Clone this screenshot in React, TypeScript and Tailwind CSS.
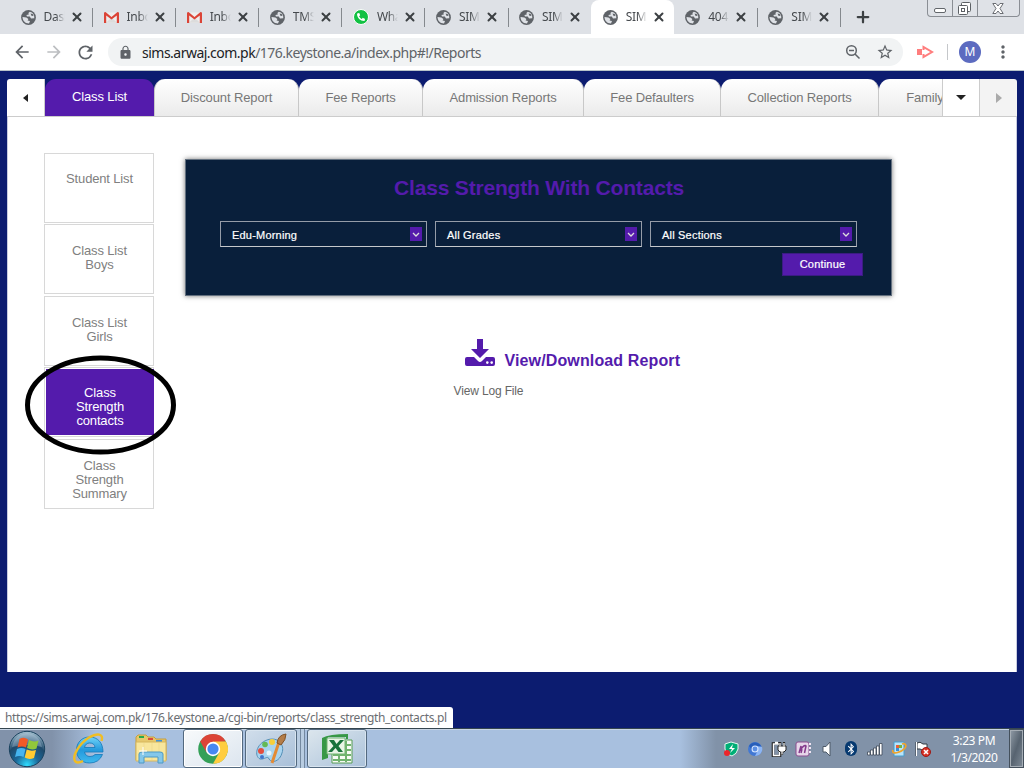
import React from "react";
import { FaBluetoothB, FaPhone } from "react-icons/fa";
import { X, Plus } from "lucide-react";
import { MdLock, MdStarBorder, MdArrowBack, MdArrowForward, MdRefresh, MdMoreVert } from "react-icons/md";

const UI = "font-['Noto_Sans','Open_Sans',sans-serif]";

function Globe() {
  return (
    <svg width="15" height="15" viewBox="0 0 15 15" className="shrink-0">
      <circle cx="7.5" cy="7.5" r="7.4" fill="#5f6368" />
      <path d="M8.8 1.8 L7.4 3 L7.8 4.4 L5.4 5 L6 6.4 L8.8 6.6 L10 8.6 L13.3 8.3 C13.6 5 12 2.4 8.8 1.8Z" fill="#dee1e6" />
      <path d="M1.5 7 L5.4 7.4 L7.4 9 L6.6 10.4 L9 11 L8 13.4 C4 13.4 1.6 10.8 1.5 7Z" fill="#dee1e6" />
      <path d="M9.6 3.6 L12 4.2 L12.4 6 L10.4 5.8Z" fill="#5f6368" />
    </svg>
  );
}

function Gmail() {
  return (
    <svg width="15" height="15" viewBox="0 0 15 15" className="shrink-0">
      <path d="M2 2.5H13V13H2Z" fill="#eeeeee" />
      <path d="M2 12.8 L7.5 7.5 L13 12.8Z" fill="#dcdcdc" />
      <path d="M0 3.2 Q0 2 1.5 2 L7.5 7 L13.5 2 Q15 2 15 3.2 V13 H12.8 V5.4 L7.5 9.6 L2.2 5.4 V13 H0Z" fill="#db4437" />
    </svg>
  );
}

function WhatsApp() {
  return (
    <span className="flex size-[16px] shrink-0 items-center justify-center rounded-full border border-white bg-[#12c143] text-[8px] text-white">
      <FaPhone className="-scale-x-100" />
    </span>
  );
}

const browserTabs = [
  { t: "Dashboard", i: "globe" },
  { t: "Inbox", i: "gmail" },
  { t: "Inbox", i: "gmail" },
  { t: "TMS", i: "globe" },
  { t: "WhatsApp", i: "wa" },
  { t: "SIMS", i: "globe" },
  { t: "SIMS", i: "globe" },
  { t: "SIMS", i: "globe", active: true },
  { t: "404", i: "globe" },
  { t: "SIMS", i: "globe" },
];

function TabStrip() {
  return (
    <div className="flex h-[34px] bg-[#dee1e6] pl-[9px]">
      {browserTabs.map((b, k) => (
        <div key={k} className={b.active ? "relative flex h-full w-[83.1px] items-center rounded-t-lg bg-white pl-[12px]" : "relative flex h-full w-[83.1px] items-center pl-[11.5px]"}>
          {b.i === "globe" ? <Globe /> : b.i === "gmail" ? <Gmail /> : <WhatsApp />}
          <span className="ml-[8px] w-[21px] overflow-hidden text-[12px] tracking-[-0.3px] whitespace-nowrap text-[#45494d] [mask-image:linear-gradient(to_right,black_55%,transparent)]">{b.t}</span>
          <X className="ml-[5px] size-[14px] shrink-0 text-[#3c4043]" strokeWidth={3.4} />
          {b.active || k === 6 ? null : <span className="absolute top-[8px] right-[-1px] h-[19px] w-px bg-[#85898e]" />}
        </div>
      ))}
      <Plus className="mt-[8px] ml-[14px] size-[18px] text-[#3c4043]" strokeWidth={3} />
      <div className="ml-[55px] flex h-[17px] w-[93px] rounded-b-[4px] border border-t-0 border-[#8a8e94] bg-[#dfe2e7]">
        <div className="flex w-[25px] items-center justify-center border-r border-[#8a8e94] pt-[4px]">
          <span className="h-[5px] w-[12px] rounded-[2px] border border-[#62666b] bg-white" />
        </div>
        <div className="flex w-[25px] items-center justify-center border-r border-[#8a8e94]">
          <svg width="13" height="13" viewBox="0 0 13 13" fill="white" stroke="#5c6065"><rect x="3.5" y=".5" width="9" height="9" rx="1" /><rect x=".5" y="3.5" width="9" height="9" rx="1" /><rect x="3.5" y="6.5" width="3" height="3" /></svg>
        </div>
        <div className="flex flex-1 items-center justify-center">
          <svg width="12" height="11" viewBox="0 0 12 11" fill="white" stroke="#5c6065" strokeWidth=".9"><path d="M.8.5H4L6 3 8 .5H11.2L8 5.5 11.2 10.5H8L6 8 4 10.5H.8L4 5.5Z" /></svg>
        </div>
      </div>
    </div>
  );
}

function Toolbar() {
  return (
    <div className="flex h-[37px] items-center border-b border-[#b8c3c9] bg-white pl-[12px] text-[#5f6368]">
      <MdArrowBack className="size-[20px]" />
      <MdArrowForward className="ml-[12px] size-[20px] text-[#bcbec1]" />
      <MdRefresh className="ml-[11px] size-[21px]" />
      <div className="ml-[12px] flex h-[28px] w-[795px] items-center rounded-full bg-[#f1f3f4] pl-[10px]">
        <MdLock className="size-[15px]" />
        <span className="ml-[9px] w-[690px] text-[14px] tracking-[-0.51px] whitespace-nowrap"><span className="text-[#202124]">sims.arwaj.com.pk</span>/176.keystone.a/index.php#!/Reports</span>
        <svg width="16" height="16" viewBox="0 0 16 16" className="ml-[13px]" fill="none" stroke="currentColor" strokeWidth="1.5"><circle cx="6.5" cy="6.5" r="4.8" /><path d="M4 6.5H9M10 10L14.500 14.500" /></svg>
        <MdStarBorder className="ml-[15px] size-[18px]" />
      </div>
      <svg width="17" height="14" viewBox="0 0 17 14" className="ml-[14px]"><path d="M0 4H5V10H0Z" fill="#ff7d7d" /><path d="M6.500 5V2L15 7L6.500 12V9" fill="none" stroke="#ff7d7d" strokeWidth="2" /></svg>
      <span className="ml-[13px] h-[16px] w-px bg-[#c5c7ca]" />
      <span className="ml-[11px] flex size-[22px] items-center justify-center rounded-full bg-[#5c6bc0] text-[12px] text-white">M</span>
      <MdMoreVert className="ml-[12px] size-[20px]" />
    </div>
  );
}

function PageTab({ label, cls }: { label: string; cls: string }) {
  return <div className={"h-[37px] shrink-0 rounded-t-[11px] border-r border-[#c8c8c8] bg-linear-to-b from-white to-[#ebebeb] pt-[11px] text-center leading-[16px] tracking-[-0.12px] whitespace-nowrap text-[#777] " + cls}>{label}</div>;
}

function PageTabs() {
  return (
    <div className="flex h-[38px] border-b border-[#ccc] text-[13px]">
      <div className="flex w-[37px] items-center justify-center rounded-tl-[3px] bg-white">
        <span className="border-y-4 border-r-[5px] border-y-transparent border-r-[#222]" />
      </div>
      <div className="flex w-[898px] overflow-hidden border-l border-[#ccc]">
        <div className="h-[37px] w-[109px] shrink-0 rounded-t-[11px] bg-[#541bac] pt-[10px] text-center leading-[16px] tracking-[-0.12px] text-white">Class List</div>
        <PageTab label="Discount Report" cls="w-[145px] border-l border-l-[#c8c8c8]" />
        <PageTab label="Fee Reports" cls="w-[124px]" />
        <PageTab label="Admission Reports" cls="w-[161px]" />
        <PageTab label="Fee Defaulters" cls="w-[137px]" />
        <PageTab label="Collection Reports" cls="w-[158px]" />
        <PageTab label="Family Reports" cls="w-[141px]" />
      </div>
      <div className="flex w-[37px] items-center justify-center border-l border-[#ccc] bg-white">
        <span className="border-x-[5px] border-t-[5px] border-x-transparent border-t-[#222]" />
      </div>
      <div className="flex flex-1 items-center justify-center rounded-tr-[3px] border-l border-[#ccc] bg-[#f3f3f3]">
        <span className="border-y-[5px] border-l-[6px] border-y-transparent border-l-[#aaa]" />
      </div>
    </div>
  );
}

const reports = [["Student List"], ["Class List", "Boys"], ["Class List", "Girls"], ["Class", "Strength", "contacts"], ["Class", "Strength", "Summary"]];

function SideMenu() {
  return (
    <div className="relative mt-[36px] ml-[36px] flex w-[110px] shrink-0 flex-col gap-[1.4px] text-center text-[13px] leading-[14px] tracking-[-0.15px] text-[#808080]">
      {reports.map((r, i) => (
        <div key={i} className="flex h-[70px] border border-[#d8d8d8] pl-px">
          <div className={i === 3 ? "-mr-px mt-px mb-px flex-1 bg-[#541bac] pt-[17px] text-white" : i === 0 ? "flex-1 pt-[18px]" : "flex-1 pt-[19px]"}>
            {r.map((line) => <div key={line}>{line}</div>)}
          </div>
        </div>
      ))}
      <svg width="152" height="100" viewBox="0 0 152 100" className="absolute top-[202px] left-[-20px]">
        <ellipse cx="76.5" cy="50" rx="73" ry="47" fill="none" stroke="black" strokeWidth="5" />
      </svg>
    </div>
  );
}

function Select({ label }: { label: string }) {
  return (
    <div className="flex h-[26px] w-[207px] items-center justify-between border border-[#959ca8] border-b-[#c5c8cb] pr-[4px] pl-[11px] text-[11px] tracking-[0.2px] text-white [-webkit-text-stroke:.2px_white]">
      <span className="pt-[2px]">{label}</span>
      <span className="flex h-[14px] w-[12px] items-center justify-center bg-[#541bac]">
        <svg width="8" height="5" viewBox="0 0 8 5" fill="none" stroke="#ddd" strokeWidth="1.3"><path d="M1 1L4 4 7 1" /></svg>
      </span>
    </div>
  );
}

function ReportContent() {
  return (
    <div className="ml-[31px] w-[707px] pt-[42px]">
      <div className="h-[137px] border border-[#63707f] bg-[#091f3b] pt-[16px] pr-[28px] pl-[34px] shadow-[0_0_5px_#777]">
        <h1 className="text-center text-[21px] leading-[24px] font-bold tracking-[-0.18px] text-[#541bac]"><span className="mr-[5px]">Class Strength With Contacts</span></h1>
        <div className="mt-[21px] flex gap-[8px]">
          <Select label="Edu-Morning" />
          <Select label="All Grades" />
          <Select label="All Sections" />
        </div>
        <div className="mt-[6px] flex justify-end">
          <button className="h-[23px] w-[81px] border border-[#3b1c83] bg-[#541bac] text-[11px] tracking-[0.2px] text-white [-webkit-text-stroke:.2px_white]">Continue</button>
        </div>
      </div>
      <div className="mt-[42px] ml-[280px] flex text-[#541bac]">
        <svg width="30" height="29" viewBox="0 0 30 29" fill="currentColor">
          <path d="M12 1H18V11H24L15 20 6 11H12Z" />
          <path d="M2 19H9L13 23Q15 25 17 23L21 19H28Q30 19 30 21V26Q30 28 28 28H2Q0 28 0 26V21Q0 19 2 19Z" />
          <circle cx="22.3" cy="24.6" r="1.3" fill="white" /><circle cx="26.7" cy="24.6" r="1.3" fill="white" />
        </svg>
        <span className="ml-[9.5px] pt-[13px] text-[16px] leading-[20px] font-bold tracking-[0.13px]">View/Download Report</span>
      </div>
      <div className="mt-[12px] ml-[268.5px] text-[12px] leading-[16px] tracking-[-0.15px] text-[#666]">View Log File</div>
    </div>
  );
}

function StartOrb() {
  return (
    <svg width="40" height="40" viewBox="0 0 40 40">
      <defs><radialGradient id="orb" cx=".5" cy=".95" r=".95"><stop offset="0" stopColor="#2fdcff" /><stop offset=".35" stopColor="#1b6798" /><stop offset=".65" stopColor="#1f4a6b" /><stop offset="1" stopColor="#a8c4d3" /></radialGradient></defs>
      <circle cx="20" cy="20" r="17.7" fill="url(#orb)" stroke="#1a425e" />
      <path d="M5 18Q8 5 20 4 32 5 35 18 20 14 5 18Z" fill="#cde" opacity=".3" />
      <path d="M12.500 10Q17 7.500 21 10.500L19 18.500Q15 16.500 10.500 18.500Z" fill="#f15a27" />
      <path d="M22 11Q27 13.500 31.500 11.500L29.500 19.500Q25 21.500 20 19Z" fill="#91c73b" />
      <path d="M10 20Q14.500 18 18.500 20L16.500 28Q12.500 26 8 28Z" fill="#45b4ef" />
      <path d="M19.700 20.500Q24 22.500 29 21L27 29Q22 31 17.700 28.500Z" fill="#ffcb32" />
    </svg>
  );
}

function IE() {
  return (
    <svg width="34" height="34" viewBox="0 0 34 34">
      <defs><linearGradient id="ie" x2="0" y2="1"><stop stopColor="#6fd3f8" /><stop offset=".5" stopColor="#2499dc" /><stop offset="1" stopColor="#3fb9ee" /></linearGradient></defs>
      <path fillRule="evenodd" d="M17.500 5C26 5 31 11 31 20H12.500Q13.500 24.500 18 24.500 21.500 24.500 23 22.500H30.500Q27 31 17.500 31C9 31 4.500 25 4.500 18S9.500 5 17.500 5ZM12.500 15.500H23Q22.500 11 17.700 11 13.500 11 12.500 15.500Z" fill="url(#ie)" stroke="#1477b8" strokeWidth=".8" />
      <path d="M29.5 9C32 1 25 1 17 5.5 7 12 0 24 3 29 5 32 9 30 11 29" fill="none" stroke="#f0bd24" strokeWidth="2.4" />
    </svg>
  );
}

function Explorer() {
  return (
    <svg width="34" height="32" viewBox="0 0 34 32">
      <path d="M2 4L4 2H12L14 4H20L22 6H32V27H2Z" fill="#e6c86c" stroke="#c79e3d" />
      <path d="M5 3h5v2H5z" fill="#26aa4c" /><path d="M14 5h5v2h-5z" fill="#db4b3c" /><path d="M22 7h6v2h-6z" fill="#3f94dc" />
      <path d="M2 9H32V28H2Z" fill="#f8e69c" stroke="#d6b75d" />
      <path d="M10 10V27M18 10V27M25 10V27" stroke="#efdc90" />
      <path d="M5 30V21Q5 19 8 19H26Q29 19 29 21V30H24V24H10V30Z" fill="#84c7e9" stroke="#4c99c6" />
      <path d="M9 14V22M5 18H13" stroke="white" strokeWidth="1" />
    </svg>
  );
}

function Chrome() {
  return (
    <svg width="30" height="30" viewBox="0 0 30 30">
      <circle cx="15" cy="15" r="14.8" fill="#34a057" />
      <path d="M2.2 7.5A14.8 14.8 0 0 1 27.9 7.5L15 8.5 8.6 18.6Z" fill="#dc4437" />
      <path d="M27.9 7.5A14.8 14.8 0 0 1 15 29.8L21.3 18.6 15 7.5Z" fill="#ffcd40" />
      <circle cx="15" cy="15" r="7.2" fill="white" /><circle cx="15" cy="15" r="5.6" fill="#4688f1" />
    </svg>
  );
}

function Paint() {
  return (
    <svg width="32" height="32" viewBox="0 0 32 32">
      <path d="M12 7C23 3 30 12 27 20 25 28 17 31 14 26 13 22 9 27 5 26 -1 23 1 11 12 7Z" fill="#a9d4ef" stroke="#5590b7" />
      <circle cx="6" cy="18" r="3" fill="#e44d3e" /><circle cx="10" cy="11.5" r="2.8" fill="#64b955" /><circle cx="17" cy="9" r="3" fill="#f6cf3d" /><circle cx="14" cy="20" r="2.5" fill="#e6f5fc" /><circle cx="7" cy="24" r="2" fill="#4075cd" />
      <path d="M17 30L24 9" stroke="#e38b35" strokeWidth="3" /><path d="M22 10Q23 2 31 1 31 7 26 12Z" fill="#b47d49" stroke="#805328" />
    </svg>
  );
}

function Excel() {
  return (
    <svg width="32" height="32" viewBox="0 0 32 32">
      <path d="M11 7H31V30H11Z" fill="#f7fbf5" stroke="#579c55" />
      <path d="M12 12H30M12 17H30M12 22H30M12 27H30M18 8V29M25 8V29" stroke="#71b36f" strokeWidth="2" />
      <path d="M1 5Q8 1 27 1V6H25V4H7V25L1 27Z" fill="#389846" />
      <path d="M6 5H24V21H6Z" fill="#eaf5e6" stroke="#73b572" />
      <path d="M8 7H13L15.5 11 19 7H23L17.5 13 22 19H17.5L14.5 15 11 19H7L12.5 13Z" fill="#18733b" />
    </svg>
  );
}

function TrayIcons() {
  return (
    <div className="flex items-center gap-[8px]">
      <svg width="16" height="16" viewBox="0 0 16 16"><path d="M2 3L8 1 15 3V8Q14 13 9 15 3 13 2 8Z" fill="#00ae76" stroke="#e4f8ef" /><path d="M10 3L6 8H9L7 12L12 7H9Z" fill="white" /><circle cx="4" cy="12" r="3" fill="#ed252b" /></svg>
      <svg width="16" height="16" viewBox="0 0 16 16"><circle cx="8" cy="8" r="7" fill="#4178d4" /><path d="M2 5A7 7 0 0 1 14 5H8L5 9Z" fill="#275eb9" /><path d="M15 6A7 7 0 0 1 8 15L11 9 8 5Z" fill="#8cb5f4" /><circle cx="8" cy="8" r="3.5" fill="#d4e5ff" /><circle cx="8" cy="8" r="2.4" fill="#5b8ee2" /></svg>
      <svg width="16" height="16" viewBox="0 0 16 16"><path d="M2 2.500H9V15H2Z" fill="#8192a8" stroke="#222" strokeWidth="2.600" /><path d="M2.500 3H8.500V14.500H2.500ZM4 1.500H7" fill="none" stroke="white" strokeWidth="1.400" /><path d="M7 5H15V9L13 11H9L7 9Z" fill="white" stroke="#222" /><path d="M9 1V5M13 1V5M11 11V14" stroke="#222" strokeWidth="2.200" /><path d="M9 2V5.500M13 2V5.500M11 10V13.500" stroke="white" strokeWidth="1.200" /></svg>
      <svg width="16" height="16" viewBox="0 0 16 16"><rect x="1" y="1" width="13" height="14" rx="2" fill="#e6d6e9" stroke="#8b4f91" /><path d="M4 12L6 5V8Q10 3 11 5L9.5 12M6 12L7 8" fill="none" stroke="#853b8d" strokeWidth="1.5" /><path d="M14 3H16M14 7H16M14 11H16" stroke="#f1e5f4" strokeWidth="2" /></svg>
      <svg width="16" height="16" viewBox="0 0 16 16"><path d="M4 5.5H7L11 1V15L7 11H4Z" fill="white" stroke="#4d5967" /></svg>
      <span className="flex h-[16px] w-[16px] items-center justify-center"><span className="flex h-[15px] w-[12px] items-center justify-center rounded-[6px] bg-[#063970] text-[12px] text-white"><FaBluetoothB /></span></span>
      <svg width="16" height="16" viewBox="0 0 16 16" fill="white" stroke="#3c4855" strokeWidth=".8"><path d="M.5 11H3V14H.5ZM3.5 9H6V14H3.5ZM6.5 7H9V14H6.5ZM9.5 5H12V14H9.5ZM12.5 2.5H15V14H12.5Z" /></svg>
      <svg width="16" height="16" viewBox="0 0 16 16"><path d="M3 1H13V15H3Z" fill="#b9e4fa" stroke="#459dcf" /><path d="M5 4H8V7H5Z" fill="#e86139" /><path d="M8 4H11V7H8Z" fill="#73b43d" /><path d="M5 7H8V10H5Z" fill="#3a91d6" /><path d="M2 9C0 14 10 12 14 7M14 7C16 4 14 2 11 3" fill="none" stroke="#efa42d" strokeWidth="1.7" /></svg>
      <svg width="16" height="16" viewBox="0 0 16 16"><path d="M1 1V15M2 2Q5 0 8 3L12 3V9Q7 10 5 8L2 8Z" fill="white" stroke="#303840" /><path d="M1.5 1V15" stroke="white" /><circle cx="11" cy="11" r="4.5" fill="#d93225" stroke="#9d1915" /><path d="M9 9L13 13M13 9L9 13" stroke="white" strokeWidth="1.6" /></svg>
    </div>
  );
}

function Taskbar() {
  return (
    <div className="flex h-[40px] border-t border-[#35454f] bg-[linear-gradient(to_right,#8192aa_0px,#8192aa_52px,#a8c0df_96px,#a8c0df_680px,#8192a8_716px)] shadow-[inset_0_1px_0_#c8d5e5]">
      <div className="flex w-[183px] items-center">
        <div className="ml-[7px] w-[40px]"><StartOrb /></div>
        <div className="ml-[25px] w-[34px]"><IE /></div>
        <div className="ml-[28px]"><Explorer /></div>
      </div>
      <div className="flex w-[60px] items-center justify-center rounded-[3px] border border-[#53697f] bg-linear-to-br from-[#f8fafb] to-[#dce5ef] shadow-[inset_0_0_0_1px_white]"><Chrome /></div>
      <div className="ml-[2px] flex w-[52px] items-center justify-center rounded-[3px] border border-[#53697f] bg-linear-to-br from-[#d1deeb] to-[#a8bfd8] shadow-[inset_0_0_0_1px_#d8e4ef]"><Paint /></div>
      <div className="w-[4px] border-r border-[#7489a0] bg-[#b8cce1]" /><div className="w-[4px] border-r border-[#7489a0] bg-[#b8cce1]" />
      <div className="ml-[2px] flex w-[60px] items-center justify-center rounded-[3px] border border-[#53697f] bg-linear-to-br from-[#dce6ed] to-[#abc2da] shadow-[inset_0_0_0_1px_#d8e4ef]"><Excel /></div>
      <div className="ml-auto flex items-center"><TrayIcons /></div>
      <div className="ml-[11px] flex w-[64px] flex-col justify-center text-center text-[12px] leading-[17px] tracking-[-0.4px] whitespace-nowrap text-white"><span>3:23 PM</span><span>1/3/2020</span></div>
      <div className="ml-[3px] w-[15px] border border-[#44505c] bg-linear-to-br from-[#929da8] via-[#576370] to-[#7f8b97] shadow-[inset_0_0_0_1px_#a5adb5]" />
    </div>
  );
}

export default function App() {
  return (
    <div className={"flex h-[768px] w-[1024px] flex-col overflow-hidden " + UI}>
      <TabStrip />
      <Toolbar />
      <main className="relative flex-1 bg-[#0c1c70] pt-[8px] pr-[7px] pl-[7px] font-['Liberation_Sans',sans-serif]">
        <div className="h-[593px] rounded-t-[3px]">
          <PageTabs />
          <div className="flex h-[555px] border-x border-[#c8cce0] bg-white">
            <SideMenu />
            <ReportContent />
          </div>
        </div>
        <div className={"absolute bottom-0 left-0 h-[21px] w-[453px] rounded-tr-[3px] bg-white pl-[5px] text-[12px] leading-[21px] tracking-[-0.39px] whitespace-nowrap text-[#6b6e72] " + UI}>https://sims.arwaj.com.pk/176.keystone.a/cgi-bin/reports/class_strength_contacts.pl</div>
      </main>
      <Taskbar />
    </div>
  );
}
